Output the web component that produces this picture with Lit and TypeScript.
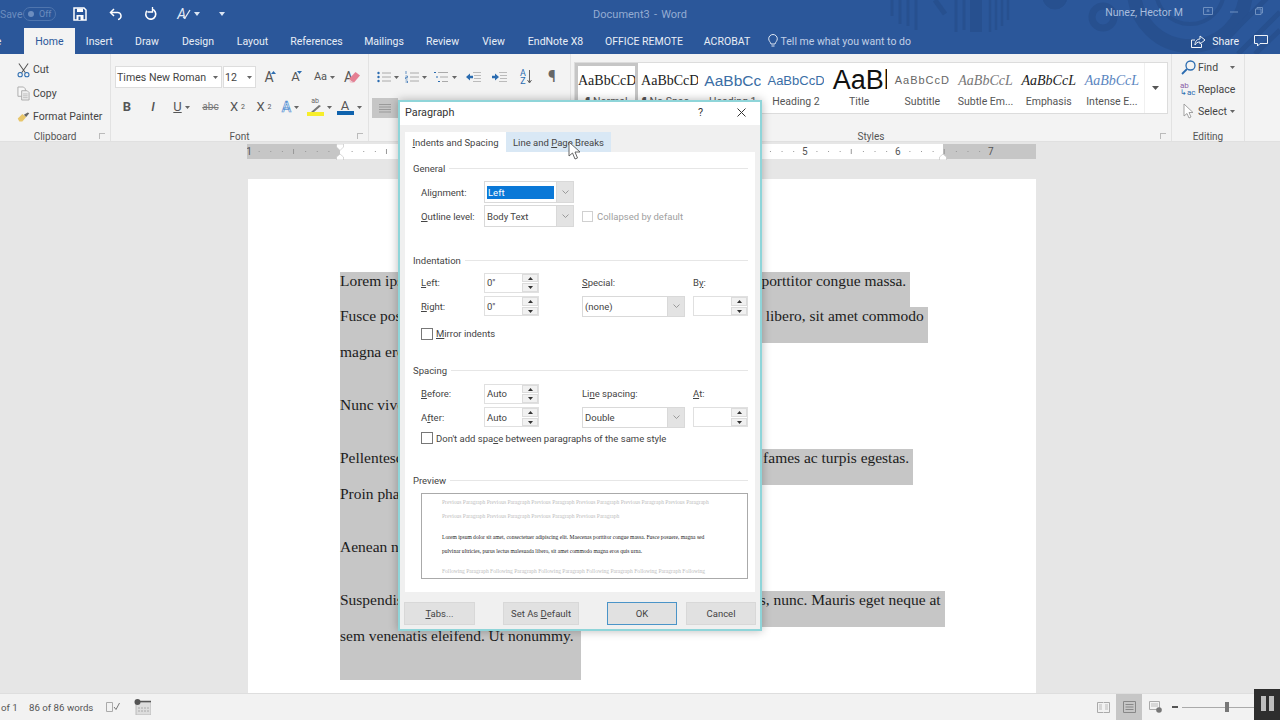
import { LitElement, html, css, svg } from "lit";
import { customElement } from "lit/decorators.js";

const TABS: [string, number][] = [
  ["File", 62], ["Home", 51], ["Insert", 48.5], ["Draw", 47], ["Design", 55], ["Layout", 54],
  ["References", 74], ["Mailings", 61], ["Review", 56], ["View", 46], ["EndNote X8", 78], ["OFFICE REMOTE", 99], ["ACROBAT", 67],
];

const caret = html`<svg class="caret" width="5" height="3" viewBox="0 0 5 3"><path d="M0 0h5L2.5 3z" fill="#666"/></svg>`;
const caretW = html`<svg width="6" height="4" viewBox="0 0 6 4"><path d="M0 0h6L3 4z" fill="#dbe5f3"/></svg>`;
const chevron = html`<svg width="7" height="4" viewBox="0 0 7 4"><path d="M.5.5l3 3 3-3" fill="none" stroke="#888" stroke-width=".8"/></svg>`;

function lines(color = "#9a9a9a") {
  return html`<svg width="12" height="11" viewBox="0 0 12 11"><path d="M0 1.5h12M0 4h12M0 6.5h12M0 9h12" stroke=${color} stroke-width="1"/></svg>`;
}
const bullets = html`<svg width="14" height="12" viewBox="0 0 14 12"><circle cx="1.5" cy="2" r="1.2" fill="#2b6cb0"/><circle cx="1.5" cy="6" r="1.2" fill="#2b6cb0"/><circle cx="1.5" cy="10" r="1.2" fill="#2b6cb0"/><path d="M5 2h9M5 6h9M5 10h9" stroke="#aaa"/></svg>`;
const numbers = html`<svg width="14" height="12" viewBox="0 0 14 12"><path d="M1 0v3M.5 5h2v1.5h-2V8h2M.5 10h2v2h-2" stroke="#2b6cb0" stroke-width=".7" fill="none"/><path d="M5 2h9M5 6h9M5 10h9" stroke="#aaa"/></svg>`;
const multi = html`<svg width="15" height="12" viewBox="0 0 15 12"><path d="M0 1.5h2M2 6h2M4 10.5h2" stroke="#2b6cb0"/><path d="M4 1.5h10M6 6h8M8 10.5h6" stroke="#aaa"/></svg>`;
const outdent = html`<svg width="15" height="12" viewBox="0 0 15 12"><path d="M7 1.5h8M8 4.5h7M8 7.5h7M7 10.5h8" stroke="#bbb"/><path d="M0 6l4-3.5v2.2h3v2.6H4v2.2z" fill="#2b6cb0"/></svg>`;
const indent = html`<svg width="15" height="12" viewBox="0 0 15 12"><path d="M7 1.5h8M8 4.5h7M8 7.5h7M7 10.5h8" stroke="#bbb"/><path d="M7 6L3 2.5v2.2H0v2.6h3v2.2z" fill="#2b6cb0"/></svg>`;
const scissors = html`<svg width="14" height="16" viewBox="0 0 14 16"><path d="M2 1l7 10M12 1L5 11" stroke="#555" stroke-width="1.1" fill="none"/><circle cx="3.4" cy="13" r="2.3" fill="none" stroke="#2b6cb0" stroke-width="1.1"/><circle cx="10.6" cy="13" r="2.3" fill="none" stroke="#2b6cb0" stroke-width="1.1"/></svg>`;
const copy = html`<svg width="14" height="15" viewBox="0 0 14 15"><path d="M1 .5h6l2 2v8H1z" fill="#f7f7f7" stroke="#aaa"/><path d="M5 4.500h6l2 2v8H5z" fill="#eee" stroke="#aaa"/><path d="M6.500 8h5M6.500 10h5M6.500 12h5" stroke="#bbb"/></svg>`;
const brush = html`<svg width="17" height="14" viewBox="0 0 17 14"><path d="M1 9l6-6 5 4-5 6H3z" fill="#e8c66a"/><path d="M9 4l5-3 2 1-4 5z" fill="#666"/></svg>`;
const eraser = html`<svg class="overlay-eraser" width="12" height="11" viewBox="0 0 12 11"><path d="M7.500 0L12 3.500 6 10.500 1 7z" fill="#e57f93"/><path d="M1 7l5 3.500-1 .5-3-.5z" fill="#f4c4cd"/></svg>`;
const findIcon = html`<svg width="15" height="15" viewBox="0 0 15 15"><circle cx="9.500" cy="5.500" r="4.500" fill="none" stroke="#2b6cb0" stroke-width="1.3"/><path d="M6 9l-5 5" stroke="#2b6cb0" stroke-width="1.8"/></svg>`;
const selectCursor = html`<svg width="11" height="16" viewBox="0 0 11 16"><path d="M1 1v12l3-2.500 2 4.500 2-1-2-4.500h4z" fill="#fff" stroke="#999" stroke-width=".9"/></svg>`;

@customElement("app-root")
export class AppRoot extends LitElement {
  static styles = css`
    :host { display: block; width: 1280px; height: 720px; overflow: hidden; font-family: Roboto, "Open Sans", sans-serif; font-size: 10.5px; color: #444; }
    * { box-sizing: border-box; }
    u { text-decoration-thickness: 1px; text-underline-offset: 1px; }
    .app { position: relative; width: 1280px; height: 720px; display: flex; flex-direction: column; overflow: hidden; background: #e6e6e6; }

    .head { position: relative; height: 54px; flex: none; background: #2b579a; color: #fff; overflow: hidden; }
    .pattern { position: absolute; left: 880px; top: 0; }
    .titlebar { position: relative; height: 28px; display: grid; grid-template-columns: 1fr auto 1fr; align-items: center; }
    .qat { display: flex; align-items: center; }
    .save-label { color: #6c8dbf; width: 23px; }
    .toggle { width: 33px; height: 14px; border: 1px solid #4f75ae; border-radius: 7px; display: flex; align-items: center; gap: 5px; padding-left: 4px; font-size: 9px; color: #6c8dbf; margin-right: 6px; }
    .toggle i { width: 6px; height: 6px; border-radius: 50%; background: #6c8dbf; }
    .qbtn { width: 35.500px; display: flex; justify-content: center; align-items: center; gap: 3px; }
    .qbtn.acheck { padding-left: 5px; }
    .chkmk { margin-left: -7px; }
    .a-check { font-size: 14px; position: relative; line-height: 14px; color: #e4ebf5; font-style: italic; }
    .doc-title { color: #94acd2; font-size: 11px; word-spacing: 1.500px; }
    .winctl { display: flex; justify-content: flex-end; align-items: center; color: #a9bedd; }
    .user { margin-right: 20px; transform: translateY(-2px); }
    .winctl svg { margin-right: 17px; transform: translateY(-3px); }
    .tabbar { position: relative; height: 26px; display: flex; align-items: center; margin-left: -38px; }
    .tab { height: 26px; flex: none; display: flex; align-items: center; justify-content: center; color: #e9eef6; padding-top: 1px; }
    .tab.active { background: #f3f3f3; color: #2b579a; }
    .tell { display: flex; align-items: center; gap: 3px; margin-left: 7px; color: #c0cfe6; flex: none; white-space: nowrap; }
    .share { margin-left: auto; display: flex; align-items: center; gap: 6px; color: #eef2f8; padding-right: 12px; }
    .share .cm { margin-left: 9px; }

    .ribbon { height: 88px; flex: none; background: #f3f3f3; display: flex; border-bottom: 1px solid #e0e0e0; }
    .group { flex: none; display: flex; flex-direction: column; border-right: 1px solid #e2e2e2; position: relative; }
    .gbody { flex: 1; min-height: 0; }
    .glabel { height: 14px; margin-bottom: -3px; flex: none; text-align: center; color: #555; font-size: 10px; line-height: 14px; }
    .launcher { position: absolute; right: 5px; bottom: 2px; width: 6px; height: 6px; border-left: 1px solid #bbb; border-top: 1px solid #bbb; }
    .g-clip { width: 111px; }
    .g-clip .gbody { padding: 4px 0 0 17px; }
    .clip-row { height: 23.500px; display: flex; align-items: center; gap: 3px; white-space: nowrap; color: #444; }
    .clip-ico { width: 13px; display: flex; justify-content: center; flex: none; }
    .g-font { width: 258px; }
    .g-font .gbody { padding: 12px 0 0 3px; }
    .font-r1, .font-r2, .para-r1 { display: grid; align-items: center; justify-items: center; }
    .font-r1 { grid-template-columns: 108px 34px 26px 27px 29px 26px; height: 22px; margin-left: 1px; }
    .font-r2 { grid-template-columns: 26px 26px 31px 27px 27px 26px 27px 30px 30px; height: 22px; margin-top: 8px; }
    .fbox { justify-self: stretch; height: 22px; background: #fff; border: 1px solid #ddd; display: flex; align-items: center; padding: 0 3px 0 1px; justify-content: space-between; white-space: nowrap; margin-right: 1px; font-size: 10.600px; }
    .cmd { display: flex; align-items: center; gap: 3px; position: relative; font-size: 13px; line-height: 14px; color: #555; }
    .cmd.big { font-size: 14px; }
    .cmd.small { font-size: 11px; }
    .tiny { margin: -9px 0 0 -6px; }
    .er { margin-left: -8px; display: flex; }
    .bold { font-weight: 700; font-size: 13px; }
    .ital { font-style: italic; font-weight: 500; }
    .under { text-decoration: underline; }
    .strike { text-decoration: line-through; font-size: 10px; color: #777; }
    sup, sub { font-size: 7px; line-height: 0; }
    .fx { color: #dfeaf6; -webkit-text-stroke: .7px #5b94d3; font-size: 14px; font-weight: 500; }
    .stack { display: flex; flex-direction: column; align-items: center; line-height: 11px; }
    .stack small { font-size: 7px; line-height: 7px; color: #666; }
    .bar { width: 17px; height: 4px; display: block; }
    .yellow { background: #f7ee2b; }
    .blue { background: #0f62ad; }
    .g-para { width: 202px; }
    .g-para .gbody { padding: 12px 0 0 0; }
    .para-r1 { grid-template-columns: 28px 27px 33px 23px 28px 26px 26px; height: 22px; margin-left: 5px; }
    .align-active { width: 26px; height: 20px; margin: 10px 0 0 3px; background: #c6c6c6; display: flex; align-items: center; justify-content: center; }
    .sort { font-size: 9px; line-height: 8px; color: #2b6cb0; display: flex; align-items: center; gap: 1px; text-align: center; }
    .pil { font-size: 16px; color: #666; }
    .g-styles { width: 601px; }
    .g-styles .gbody { padding: 8px 3px 0 3px; }
    .gallery { display: flex; height: 52px; background: #fff; border: 1px solid #dcdcdc; overflow: hidden; }
    .style-item { width: 63.200px; flex: none; display: flex; flex-direction: column; align-items: center; overflow: hidden; height: 52px; padding-top: 5px; }
    .style-item.sel { border: 3px solid #c6c6c6; padding-top: 2px; width: 63px; }
    .pv { height: 25px; line-height: 25px; white-space: nowrap; overflow: hidden; width: 57px; text-align: center; color: #222; font-family: "Liberation Serif", serif; font-size: 14px; }
    .pv.h1 { font-family: "Liberation Sans", sans-serif; font-size: 15.500px; color: #3a6ea5; }
    .pv.h2 { font-family: "Liberation Sans", sans-serif; font-size: 13px; color: #3a6ea5; }
    .pv.title { font-family: "Liberation Sans", sans-serif; font-size: 27px; color: #111; text-align: left; padding-left: 1.500px; width: 56px; }
    .pv.sub { font-family: "Liberation Sans", sans-serif; font-size: 11px; letter-spacing: 1px; color: #666; }
    .pv.sem { font-style: italic; color: #777; }
    .pv.em { font-style: italic; }
    .pv.ie { font-style: italic; color: #5b86bf; }
    .sn { color: #555; font-size: 10.500px; line-height: 14px; margin-top: 2px; white-space: nowrap; }
    .more { flex: 1; display: flex; align-items: center; justify-content: center; border-left: 1px solid #f0f0f0; }
    .g-edit { width: 73px; }
    .g-edit .gbody { padding: 2px 0 0 8px; }
    .ed-row { height: 22px; display: flex; align-items: center; gap: 1px; white-space: nowrap; }
    .ed-ico { width: 17px; display: flex; justify-content: center; flex: none; }
    .abac { display: block; font-size: 8px; line-height: 7px; color: #8a5fa8; white-space: nowrap; text-align: left; }
    .abac b { display: block; font-weight: 400; color: #2b6cb0; }

    .rulerbar { height: 20px; flex: none; background: #e6e6e6; padding: 2px 0 0 247px; }
    .rulerbar svg { display: block; }
    .rulerbar text { font-family: Roboto, sans-serif; font-size: 10px; fill: #555; text-anchor: middle; }

    .docarea { flex: 1; min-height: 0; padding: 17px 0 0 248px; overflow: hidden; background: #e6e6e6; }
    .page { width: 788px; height: 600px; background: #fff; padding: 92.500px 0 0 92px; font-family: "Liberation Serif", serif; font-size: 15.470px; color: #1c1c1c; }
    .ln { width: fit-content; background: #c6c6c6; height: 35.500px; line-height: 18px; padding-right: 4px; white-space: nowrap; }
    .ln.end { height: 53.250px; }
    .ln.last { padding-right: 7px; }

    .status { height: 27px; flex: none; background: #f2f2f2; border-top: 1px solid #dedede; display: flex; align-items: center; color: #555; position: relative; font-size: 9.700px; }
    .status .of { margin-left: 1px; width: 28px; }
    .status .words { width: 77px; white-space: nowrap; }
    .status .macro { margin-left: 14px; }
    .views { margin-left: auto; display: flex; align-items: center; height: 100%; margin-right: 26px; }
    .view { width: 26px; height: 100%; display: flex; align-items: center; justify-content: center; }
    .view.on { background: #c6c6c6; }
    .minus { width: 6px; height: 1.500px; background: #555; margin: 0 4px 0 4px; }
    .track { width: 72px; height: 1px; background: #aaa; position: relative; }
    .thumb { position: absolute; left: 43px; top: -5px; width: 4px; height: 10px; background: #777; }
    .pause { position: absolute; left: 1254px; top: 689px; width: 26px; height: 31px; background: #2e2e2e; display: flex; gap: 3px; justify-content: center; padding-top: 7px; }
    .pause i { width: 5px; height: 15px; background: #bdbdbd; }

    .dialog { position: absolute; left: 398px; top: 100px; width: 364px; height: 531px; background: #f0f0f0; border: 2px solid #8fd5d9; box-shadow: 0 0 9px rgba(0,0,0,.28); display: flex; flex-direction: column; font-size: 9.500px; white-space: nowrap; }
    .dtitle { height: 23px; background: #fff; flex: none; display: flex; align-items: center; padding: 0 0 2px 5px; font-size: 10.800px; color: #333; }
    .dtitle .q { margin-left: auto; margin-right: 34px; }
    .dtitle .x { margin-right: 14px; display: flex; }
    .dtabs { height: 20px; margin: 7px 0 0 5px; display: flex; flex: none; }
    .dtab { height: 20px; display: flex; align-items: center; justify-content: center; }
    .dtab.a { width: 101px; background: #fff; }
    .dtab.b { width: 105px; background: #d9e8f5; }
    .panel { width: 350px; height: 440px; margin-left: 5px; background: #fff; padding: 9px 7px 0 8px; flex: none; }
    .hd { display: flex; align-items: center; gap: 4px; height: 14px; }
    .hd::after { content: ""; flex: 1; height: 1px; background: #e6e6e6; }
    .gen { display: grid; grid-template-columns: 63px 90px 8px 1fr; grid-auto-rows: 24px; align-items: center; margin: 5px 0 0 8px; }
    .hd.indent { margin-top: 25px; }
    .sel-box { height: 22px; border: 1px solid #d9d9d9; background: #fff; display: flex; align-items: stretch; }
    .sel-text { flex: 1; display: flex; align-items: center; padding: 0 2px; min-width: 0; }
    .sel-text.picked span { background: #0a78d7; color: #fff; width: 100%; height: 13px; line-height: 13px; padding-left: 1px; }
    .sel-arrow { width: 17px; background: #e3e3e3; display: flex; align-items: center; justify-content: center; flex: none; border-left: 1px solid #d9d9d9; }
    .coll { display: flex; align-items: center; gap: 4px; color: #a0a0a0; }
    .chk { width: 12px; height: 12px; border: 1px solid #777; background: #fff; flex: none; }
    .coll .chk { width: 11px; height: 11px; border-color: #d0d0d0; }
    .ind { display: grid; grid-template-columns: 63px 55px 43px 103px 8px 55px; grid-auto-rows: 23.500px; align-items: center; margin: 4px 0 0 8px; }
    .sect-sp + .ind { margin-top: 5px; }
    .spin { height: 20px; border: 1px solid #e0e0e0; background: #fff; display: flex; padding-left: 2px; align-items: center; justify-content: space-between; }
    .updown { width: 16px; height: 18px; display: flex; flex-direction: column; gap: 1px; }
    .updown span { flex: 1; background: #f1f1f1; border: 1px solid #dcdcdc; display: flex; align-items: center; justify-content: center; }
    .ind .sel-box { height: 21px; }
    .chkrow { display: flex; align-items: center; gap: 3px; height: 23px; margin: 4px 0 0 8px; }
    .chkrow.tight { height: 22px; margin-top: -2px; }
    .sect-sp { margin-top: 18px; }
    .sect-pr { margin-top: 24.500px; }
    .preview { margin: 5.500px 0 0 8px; width: 327px; height: 86px; border: 1px solid #aaa; background: #fff; padding: 1px 0 0 20px; font-family: "Liberation Serif", serif; font-size: 5.550px; line-height: 14px; color: #222; overflow: hidden; }
    .preview .g { color: #bdbdbd; }
    .preview .m1 { margin-top: 7px; }
    .preview .m2 { margin-top: 6px; }
    .dfoot { flex: 1; display: flex; align-items: center; padding: 5px 0 0 4px; }
    .btn { height: 23px; background: #e1e1e1; border: 1px solid #d8d8d8; display: flex; align-items: center; justify-content: center; flex: none; }
    .b-tabs { width: 71px; }
    .b-def { width: 76px; margin-left: 28px; }
    .b-ok { width: 70px; margin-left: 28px; border-color: #4a94c8; }
    .b-can { width: 70px; margin-left: 9px; }
    .cursor { position: absolute; left: 568px; top: 141px; }
  `;

  private ruler() {
    const marks = [];
    const x0 = 93;
    for (let i = -8; i <= 56; i++) {
      const x = x0 + i * 11.62;
      if (x < 0 || x > 789) continue;
      if (i % 8 === 0) {
        const n = Math.abs(i / 8);
        if (n > 0) marks.push(svg`<text x=${i < 0 ? x + 2 : x} y="11">${n}</text>`);
      } else if (i % 4 === 0) {
        marks.push(svg`<path d="M${x} 5v5" stroke="#999"/>`);
      } else {
        marks.push(svg`<rect x=${x} y="7" width="1" height="1" fill="#999"/>`);
      }
    }
    return html`<svg width="790" height="16" viewBox="0 0 790 16">
      <rect width="789" height="15" fill="#c6c6c6"/>
      <rect x="93" width="603" height="15" fill="#fff"/>
      ${marks}
      <path d="M89.500 0h7v3l-3.500 3.500-3.500-3.500z" fill="#fff" stroke="#c0c0c0" stroke-width=".6"/>
      <path d="M93 10l3.500 3v3h-7v-3z" fill="#fff" stroke="#c0c0c0" stroke-width=".6"/>
      <path d="M696 10l3.500 3v3h-7v-3z" fill="#fff" stroke="#c0c0c0" stroke-width=".6"/>
    </svg>`;
  }

  private spin(val: string) {
    const up = html`<svg width="5" height="3" viewBox="0 0 5 3"><path d="M0 3h5L2.500 0z" fill="#333"/></svg>`;
    const dn = html`<svg width="5" height="3" viewBox="0 0 5 3"><path d="M0 0h5L2.500 3z" fill="#333"/></svg>`;
    return html`<div class="spin"><span>${val}</span><div class="updown"><span>${up}</span><span>${dn}</span></div></div>`;
  }

  private select(content: unknown, picked = false) {
    return html`<div class="sel-box"><div class="sel-text ${picked ? "picked" : ""}"><span>${content}</span></div><div class="sel-arrow">${chevron}</div></div>`;
  }

  private head() {
    return html`<div class="head">
      <svg class="pattern" width="400" height="54" viewBox="0 0 400 54" fill="none">
        <g stroke="#27508f">
          <path d="M12 0v16M20 0v24M28 0v26M36 0v30" stroke-width="3"/>
          <path d="M55 0l10 14" stroke-width="5"/>
          <path d="M76 0v32M84 0v30" stroke-width="3"/>
          <path d="M96 0v32" stroke-width="12"/>
          <path d="M110 0v32M116 0v30M122 0v26M128 0v20" stroke-width="2.500"/>
          <circle cx="175" cy="-3" r="12" fill="#27508f"/>
          <circle cx="223" cy="17" r="11" stroke-width="7"/>
          <circle cx="310" cy="-10" r="56" stroke-width="14"/>
          <circle cx="310" cy="-10" r="34" stroke-width="4"/>
          <path d="M345 40L400 -15M358 54L400 12M375 54L400 30" stroke-width="5"/>
        </g>
      </svg>
      <div class="titlebar">
        <div class="qat">
          <span class="save-label">Save</span>
          <span class="toggle"><i></i>Off</span>
          <span class="qbtn"><svg width="14" height="14" viewBox="0 0 14 14"><path d="M1 1h10l2 2v10H1z" fill="none" stroke="#fff" stroke-width="1.500"/><path d="M4 1.500h6v3.500H4zM3.500 8h7v5h-7z" fill="#fff"/><rect x="5.500" y="9.500" width="2" height="3.500" fill="#2b579a"/></svg></span>
          <span class="qbtn"><svg width="13" height="13" viewBox="0 0 13 13" fill="none"><path d="M5 1L1.500 4.500 5 8" stroke="#fff" stroke-width="1.500"/><path d="M2 4.500h6a3.500 3.500 0 0 1 1 7" stroke="#fff" stroke-width="1.500"/></svg></span>
          <span class="qbtn"><svg width="14" height="14" viewBox="0 0 14 14" fill="none"><path d="M8 2.300a5 5 0 1 1-5 1.500" stroke="#fff" stroke-width="1.600"/><path d="M8.500 0v5h-5" stroke="#fff" stroke-width="1.300"/></svg></span>
          <span class="qbtn acheck"><span class="a-check">A</span><svg class="chkmk" width="9" height="10" viewBox="0 0 9 10"><path d="M1 8l2 1 5-8" fill="none" stroke="#e4ebf5" stroke-width="1.300"/></svg>${caretW}</span>
          <span class="qbtn">${caretW}</span>
        </div>
        <div class="doc-title">Document3 - Word</div>
        <div class="winctl">
          <span class="user">Nunez, Hector M</span>
          <svg width="10" height="8" viewBox="0 0 10 8"><path d="M.5.5h9v7h-9zM5 2v3M3.500 4h3" fill="none" stroke="#6f90c0"/></svg>
          <svg width="8" height="8" viewBox="0 0 8 8"><path d="M0 5h8" stroke="#6f90c0"/></svg>
          <svg width="8" height="8" viewBox="0 0 8 8"><path d="M2 2V.5h5.500V6H6M.5 2H6v5.500H.5z" fill="none" stroke="#6f90c0"/></svg>
        </div>
      </div>
      <div class="tabbar">
        ${TABS.map(([t, w]) => html`<div class="tab ${t === "Home" ? "active" : ""}" style="width:${w}px">${t}</div>`)}
        <div class="tell">
          <svg width="10" height="14" viewBox="0 0 10 14" fill="none"><path d="M3 10C2.500 8 .7 7 .7 4.800a4.300 4.300 0 0 1 8.600 0C9.300 7 7.500 8 7 10zM3.500 12h3" stroke="#dfe7f3"/></svg>
          Tell me what you want to do
        </div>
        <div class="share">
          <svg width="15" height="13" viewBox="0 0 15 13" fill="none"><path d="M4 5H.5v7.500h10V9" stroke="#eef2f8"/><path d="M9 1l5 4-5 4V7C6.500 7 5 8 4 10c0-3.500 2-6 5-6z" stroke="#eef2f8"/></svg>
          Share
          <svg class="cm" width="14" height="12" viewBox="0 0 14 12" fill="none"><path d="M.5.500h13v8H6L3.500 11V8.500h-3z" stroke="#eef2f8"/></svg>
        </div>
      </div>
    </div>`;
  }

  private ribbon() {
    const styles: [string, string, string][] = [
      ["", "AaBbCcDc", "¶ Normal"], ["", "AaBbCcDc", "¶ No Spac..."], ["h1", "AaBbCc", "Heading 1"], ["h2", "AaBbCcD", "Heading 2"],
      ["title", "AaBb", "Title"], ["sub", "AaBbCcD", "Subtitle"], ["sem", "AaBbCcL", "Subtle Em..."], ["em", "AaBbCcL", "Emphasis"], ["ie", "AaBbCcL", "Intense E..."],
    ];
    return html`<div class="ribbon">
      <div class="group g-clip">
        <div class="gbody">
          <div class="clip-row"><span class="clip-ico">${scissors}</span>Cut</div>
          <div class="clip-row"><span class="clip-ico">${copy}</span>Copy</div>
          <div class="clip-row"><span class="clip-ico">${brush}</span>Format Painter</div>
        </div>
        <div class="glabel">Clipboard</div><i class="launcher"></i>
      </div>
      <div class="group g-font">
        <div class="gbody">
          <div class="font-r1">
            <div class="fbox"><span>Times New Roman</span>${caret}</div>
            <div class="fbox"><span>12</span>${caret}</div>
            <div class="cmd big">A<svg class="tiny" width="5" height="3" viewBox="0 0 5 3"><path d="M0 3h5L2.500 0z" fill="#2b6cb0"/></svg></div>
            <div class="cmd">A<svg class="tiny" width="5" height="3" viewBox="0 0 5 3"><path d="M0 0h5L2.500 3z" fill="#2b6cb0"/></svg></div>
            <div class="cmd small">Aa ${caret}</div>
            <div class="cmd big">A<span class="er">${eraser}</span></div>
          </div>
          <div class="font-r2">
            <div class="cmd bold">B</div>
            <div class="cmd ital">I</div>
            <div class="cmd"><span class="under">U</span>${caret}</div>
            <div class="cmd strike">abc</div>
            <div class="cmd">X<sub>2</sub></div>
            <div class="cmd">X<sup>2</sup></div>
            <div class="cmd"><span class="fx">A</span>${caret}</div>
            <div class="cmd"><span class="stack"><small>ab</small><svg width="14" height="7" viewBox="0 0 14 7"><path d="M3 7l8-7 2 1-7 6z" fill="#777"/></svg><i class="bar yellow"></i></span>${caret}</div>
            <div class="cmd"><span class="stack"><span>A</span><i class="bar blue"></i></span>${caret}</div>
          </div>
        </div>
        <div class="glabel">Font</div><i class="launcher"></i>
      </div>
      <div class="group g-para">
        <div class="gbody">
          <div class="para-r1">
            <div class="cmd">${bullets}${caret}</div>
            <div class="cmd">${numbers}${caret}</div>
            <div class="cmd">${multi}${caret}</div>
            <div class="cmd">${outdent}</div>
            <div class="cmd">${indent}</div>
            <div class="cmd sort"><span>A<br />Z</span><svg width="5" height="14" viewBox="0 0 5 14"><path d="M2.500 0v13M.5 10l2 3 2-3" fill="none" stroke="#666"/></svg></div>
            <div class="cmd pil">¶</div>
          </div>
          <div class="align-active">${lines()}</div>
        </div>
        <div class="glabel">Paragraph</div>
      </div>
      <div class="group g-styles">
        <div class="gbody">
          <div class="gallery">
            ${styles.map(([c, p, n], i) => html`<div class="style-item ${i === 0 ? "sel" : ""}"><div class="pv ${c}">${p}</div><div class="sn">${n}</div></div>`)}
            <div class="more"><svg width="7" height="4" viewBox="0 0 7 4"><path d="M0 0h7L3.500 4z" fill="#555"/></svg></div>
          </div>
        </div>
        <div class="glabel">Styles</div><i class="launcher"></i>
      </div>
      <div class="group g-edit">
        <div class="gbody">
          <div class="ed-row"><span class="ed-ico">${findIcon}</span>Find&nbsp;&nbsp;&nbsp;&nbsp;${caret}</div>
          <div class="ed-row"><span class="ed-ico abac">ab<b>↳ac</b></span>Replace</div>
          <div class="ed-row"><span class="ed-ico">${selectCursor}</span>Select&nbsp;${caret}</div>
        </div>
        <div class="glabel">Editing</div>
      </div>
    </div>`;
  }

  private page() {
    const rows: [string, string][] = [
      ["Lorem ipsum dolor sit amet, consectetuer adipiscing elit. Maecenas porttitor congue massa.", ""],
      ["Fusce posuere, magna sed pulvinar ultricies, purus lectus malesuada libero, sit amet commodo", ""],
      ["magna eros quis urna.", "end"],
      ["Nunc viverra imperdiet enim. Fusce est. Vivamus a tellus.", "end"],
      ["Pellentesque habitant morbi tristique senectus et netus et malesuada fames ac turpis egestas.", ""],
      ["Proin pharetra nonummy pede. Mauris et orci.", "end"],
      ["Aenean nec lorem. In porttitor. Donec laoreet nonummy augue.", "end"],
      ["Suspendisse dui purus, scelerisque at, vulputate vitae, pretium mattis, nunc. Mauris eget neque at", ""],
      ["sem venenatis eleifend. Ut nonummy.", "end last"],
    ];
    return html`<div class="page">${rows.map(([t, c]) => html`<div class="ln ${c}">${t}</div>`)}</div>`;
  }

  private dialog() {
    return html`<div class="dialog">
      <div class="dtitle"><span>Paragraph</span><span class="q">?</span><span class="x"><svg width="9" height="9" viewBox="0 0 9 9"><path d="M.5.5l8 8M8.500.5l-8 8" stroke="#333"/></svg></span></div>
      <div class="dtabs">
        <div class="dtab a"><span><u>I</u>ndents and Spacing</span></div>
        <div class="dtab b"><span>Line and <u>P</u>age Breaks</span></div>
      </div>
      <div class="panel">
        <div class="hd">General</div>
        <div class="gen">
          <span>Ali<u>g</u>nment:</span>${this.select("Left", true)}<span></span><span></span>
          <span><u>O</u>utline level:</span>${this.select("Body Text")}<span></span>
          <span class="coll"><i class="chk"></i>Collapsed by default</span>
        </div>
        <div class="hd indent">Indentation</div>
        <div class="ind">
          <span><u>L</u>eft:</span>${this.spin('0"')}<span></span><span><u>S</u>pecial:</span><span></span><span>B<u>y</u>:</span>
          <span><u>R</u>ight:</span>${this.spin('0"')}<span></span>${this.select("(none)")}<span></span>${this.spin("")}
        </div>
        <div class="chkrow"><i class="chk"></i><span><u>M</u>irror indents</span></div>
        <div class="hd sect-sp">Spacing</div>
        <div class="ind">
          <span><u>B</u>efore:</span>${this.spin("Auto")}<span></span><span>Li<u>n</u>e spacing:</span><span></span><span><u>A</u>t:</span>
          <span>A<u>f</u>ter:</span>${this.spin("Auto")}<span></span>${this.select("Double")}<span></span>${this.spin("")}
        </div>
        <div class="chkrow tight"><i class="chk"></i><span>Don't add spa<u>c</u>e between paragraphs of the same style</span></div>
        <div class="hd sect-pr">Preview</div>
        <div class="preview">
          <div class="g">Previous Paragraph Previous Paragraph Previous Paragraph Previous Paragraph Previous Paragraph Previous Paragraph</div>
          <div class="g">Previous Paragraph Previous Paragraph Previous Paragraph Previous Paragraph</div>
          <div class="m1">Lorem ipsum dolor sit amet, consectetuer adipiscing elit. Maecenas porttitor congue massa. Fusce posuere, magna sed</div>
          <div>pulvinar ultricies, purus lectus malesuada libero, sit amet commodo magna eros quis urna.</div>
          <div class="g m2">Following Paragraph Following Paragraph Following Paragraph Following Paragraph Following Paragraph Following</div>
        </div>
      </div>
      <div class="dfoot">
        <div class="btn b-tabs"><span><u>T</u>abs...</span></div>
        <div class="btn b-def"><span>Set As <u>D</u>efault</span></div>
        <div class="btn b-ok">OK</div>
        <div class="btn b-can">Cancel</div>
      </div>
    </div>`;
  }

  render() {
    return html`<div class="app">
      ${this.head()}
      ${this.ribbon()}
      <div class="rulerbar">${this.ruler()}</div>
      <div class="docarea">${this.page()}</div>
      <div class="status">
        <span class="of">of 1</span>
        <span class="words">86 of 86 words</span>
        <svg width="14" height="10" viewBox="0 0 14 10" fill="none"><path d="M.5.5h6v9h-6z" stroke="#aaa"/><path d="M8 5l2 2.500L13.500 1" stroke="#777"/></svg>
        <svg class="macro" width="17" height="16" viewBox="0 0 17 16"><rect x="2" y="3" width="15" height="13" fill="#ddd" stroke="#bbb"/><path d="M4 9h11M4 12h11" stroke="#aaa" stroke-dasharray="2 1"/><circle cx="3.500" cy="3" r="3" fill="#555"/><path d="M6 2.500h11" stroke="#555" stroke-width="1.500"/></svg>
        <div class="views">
          <div class="view"><svg width="13" height="11" viewBox="0 0 13 11" fill="none"><path d="M.5.5h5.500l.5.500.5-.500h5.500v10h-5.500l-.5.500-.5-.500H.5z" stroke="#aaa"/><path d="M2 3h3M2 5h3M2 7h3M8 3h3M8 5h3M8 7h3" stroke="#bbb"/></svg></div>
          <div class="view on"><svg width="13" height="12" viewBox="0 0 13 12" fill="none"><path d="M.5.5h12v11H.5z" stroke="#888"/><path d="M2.500 3.500h8M2.500 6h8M2.500 8.500h8" stroke="#888"/></svg></div>
          <div class="view"><svg width="13" height="12" viewBox="0 0 13 12" fill="none"><path d="M.5.5h10v8H.5z" stroke="#aaa"/><path d="M2 3h7M2 5h7" stroke="#bbb"/><circle cx="10" cy="9" r="2.800" fill="#777"/></svg></div>
          <i class="minus"></i>
          <div class="track"><i class="thumb"></i></div>
        </div>
      </div>
      ${this.dialog()}
      <svg class="cursor" width="13" height="20" viewBox="0 0 13 20"><path d="M1 1v14l3.500-3 2.500 6 2.500-1-2.500-6H12z" fill="#fff" stroke="#555" stroke-width=".9"/></svg>
      <div class="pause"><i></i><i></i></div>
    </div>`;
  }
}
